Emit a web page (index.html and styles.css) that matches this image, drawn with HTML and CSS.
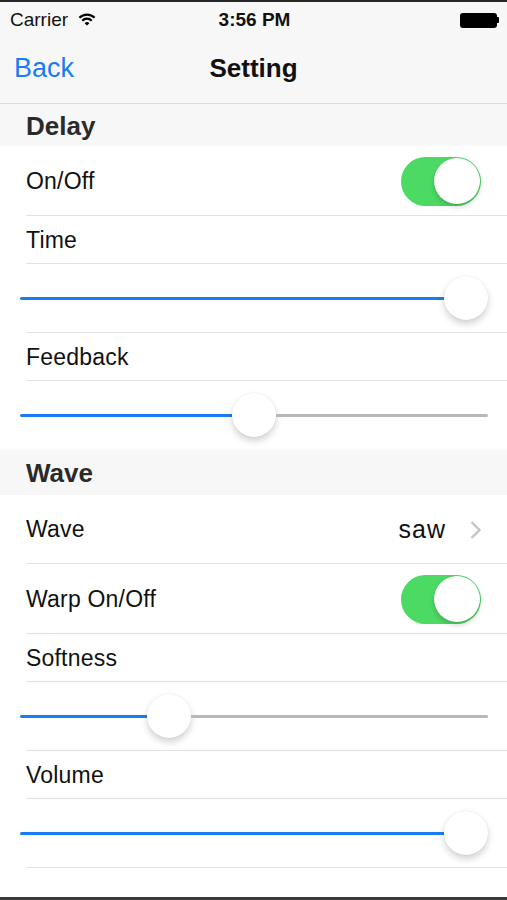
FILE: index.html
```html
<!DOCTYPE html>
<html lang="en">
<head>
    <meta charset="UTF-8">
    <meta name="viewport" content="width=device-width, initial-scale=1.0">
    <title>Setting</title>
    <link rel="stylesheet" href="styles.css">
</head>
<body>
    <div class="screen">
        <div class="status-bar">
            <div class="status-left">
                <span>Carrier</span>
                <svg class="wifi" width="18" height="13" viewBox="0 0 18 13">
                    <path d="M1.4 4.8 A10.5 10.5 0 0 1 16.6 4.8" fill="none" stroke="#000" stroke-width="2.2"/>
                    <path d="M4.3 7.7 A6.4 6.4 0 0 1 13.7 7.7" fill="none" stroke="#000" stroke-width="2.2"/>
                    <path d="M9 12.6 L6.6 10.2 A3.3 3.3 0 0 1 11.4 10.2 Z" fill="#000"/>
                </svg>
            </div>
            <div class="status-time">3:56 PM</div>
            <div class="status-right">
                <div class="battery"></div>
                <div class="battery-nub"></div>
            </div>
        </div>

        <div class="nav-bar">
            <span class="nav-back">Back</span>
            <span class="nav-title">Setting</span>
            <span class="nav-spacer"></span>
        </div>

        <div class="section-head first">Delay</div>

        <div class="row row-switch">
            <span class="label">On/Off</span>
            <div class="switch on"><div class="switch-knob"></div></div>
        </div>
        <div class="row row-short"><span class="label">Time</span></div>
        <div class="row row-slider">
            <div class="slider">
                <div class="track-fill" style="width: 424px"></div>
                <div class="thumb"></div>
                <div class="track-rest"></div>
            </div>
        </div>
        <div class="row row-short"><span class="label">Feedback</span></div>
        <div class="row row-slider last">
            <div class="slider">
                <div class="track-fill" style="width: 212px"></div>
                <div class="thumb"></div>
                <div class="track-rest"></div>
            </div>
        </div>

        <div class="section-head">Wave</div>

        <div class="row row-tall">
            <span class="label">Wave</span>
            <div class="detail">
                <span class="detail-value">saw</span>
                <svg class="chevron" width="13" height="20" viewBox="0 0 13 20">
                    <polyline points="2.5,2 10.5,10 2.5,18" fill="none" stroke="#c4c4c8" stroke-width="2.4"/>
                </svg>
            </div>
        </div>
        <div class="row row-switch">
            <span class="label">Warp On/Off</span>
            <div class="switch on"><div class="switch-knob"></div></div>
        </div>
        <div class="row row-short"><span class="label">Softness</span></div>
        <div class="row row-slider">
            <div class="slider">
                <div class="track-fill" style="width: 127px"></div>
                <div class="thumb"></div>
                <div class="track-rest"></div>
            </div>
        </div>
        <div class="row row-short"><span class="label">Volume</span></div>
        <div class="row row-slider">
            <div class="slider">
                <div class="track-fill" style="width: 424px"></div>
                <div class="thumb"></div>
                <div class="track-rest"></div>
            </div>
        </div>

        <div class="filler"></div>
    </div>
</body>
</html>
```

FILE: styles.css
```css
* { box-sizing: border-box; }
body { margin: 0; font-family: "Liberation Sans", Arial, sans-serif; background: #fff; color: #111; }

.screen {
    width: 507px;
    height: 900px;
    display: flex;
    flex-direction: column;
    border-top: 2px solid #262626;
    border-bottom: 3px solid #3a3a3a;
    overflow: hidden;
}

/* status bar + nav */
.status-bar {
    height: 38px;
    background: #f7f7f7;
    display: flex;
    align-items: center;
    justify-content: space-between;
    padding: 0 8px 2px 10px;
    font-size: 19px;
}
.status-left { display: flex; align-items: center; gap: 10px; width: 110px; }
.wifi { margin-top: -1px; }
.status-time { font-weight: bold; color: #111; }
.status-right { display: flex; align-items: center; justify-content: flex-end; width: 110px; }
.battery { width: 37px; height: 15px; background: #000; border-radius: 3px; }
.battery-nub { width: 2px; height: 6px; background: #000; border-radius: 0 1px 1px 0; }

.nav-bar {
    height: 64px;
    background: #f7f7f7;
    border-bottom: 1px solid #dcdcdc;
    display: flex;
    align-items: center;
    justify-content: space-between;
    padding: 0 14px 7px 14px;
}
.nav-back { color: #1a7cf5; font-size: 27px; width: 90px; }
.nav-title { font-size: 26px; font-weight: bold; color: #111; }
.nav-spacer { width: 90px; }

/* sections */
.section-head {
    height: 45px;
    background: #f7f7f7;
    display: flex;
    align-items: center;
    padding: 2px 0 0 26px;
    font-size: 26px;
    font-weight: bold;
    color: #2a2a2a;
}
.section-head.first { height: 42px; }

.row {
    display: flex;
    align-items: center;
    justify-content: space-between;
    padding: 0 26px;
    position: relative;
    background: #fff;
}
.row::after {
    content: "";
    position: absolute;
    left: 26px;
    right: 0;
    bottom: 0;
    height: 1px;
    background: #e2e2e2;
}
.row.last::after { display: none; }
.row-switch { height: 70px; }
.row-tall { height: 69px; }
.row-short { height: 48px; }
.row-slider { height: 69px; padding: 0 19px 0 20px; }

.label { font-size: 23px; color: #111; letter-spacing: 0.2px; }

/* switch */
.switch {
    width: 80px;
    height: 49px;
    border-radius: 25px;
    background: #4cd964;
    display: flex;
    align-items: center;
    justify-content: flex-end;
    padding: 1px;
}
.switch-knob {
    width: 46px;
    height: 46px;
    border-radius: 50%;
    background: #fff;
    box-shadow: 0 3px 5px rgba(0, 0, 0, 0.18), 0 0 0 0.5px rgba(0, 0, 0, 0.06);
}

/* detail */
.detail { display: flex; align-items: center; gap: 23px; }
.detail-value { font-size: 25px; color: #111; letter-spacing: 1px; }
.chevron { margin-right: -1px; }

/* slider */
.slider { flex: 1; display: flex; align-items: center; margin-bottom: 1px; }
.track-fill { height: 3px; background: #1a7cf5; border-radius: 2px 0 0 2px; }
.track-rest { flex: 1; height: 3px; background: #b8b8b8; border-radius: 0 2px 2px 0; }
.thumb {
    width: 44px;
    height: 44px;
    flex-shrink: 0;
    border-radius: 50%;
    background: #fff;
    box-shadow: 0 4px 7px rgba(0, 0, 0, 0.18), 0 0 0 0.5px rgba(0, 0, 0, 0.05);
}

.filler { flex: 1; background: #fff; }
```
